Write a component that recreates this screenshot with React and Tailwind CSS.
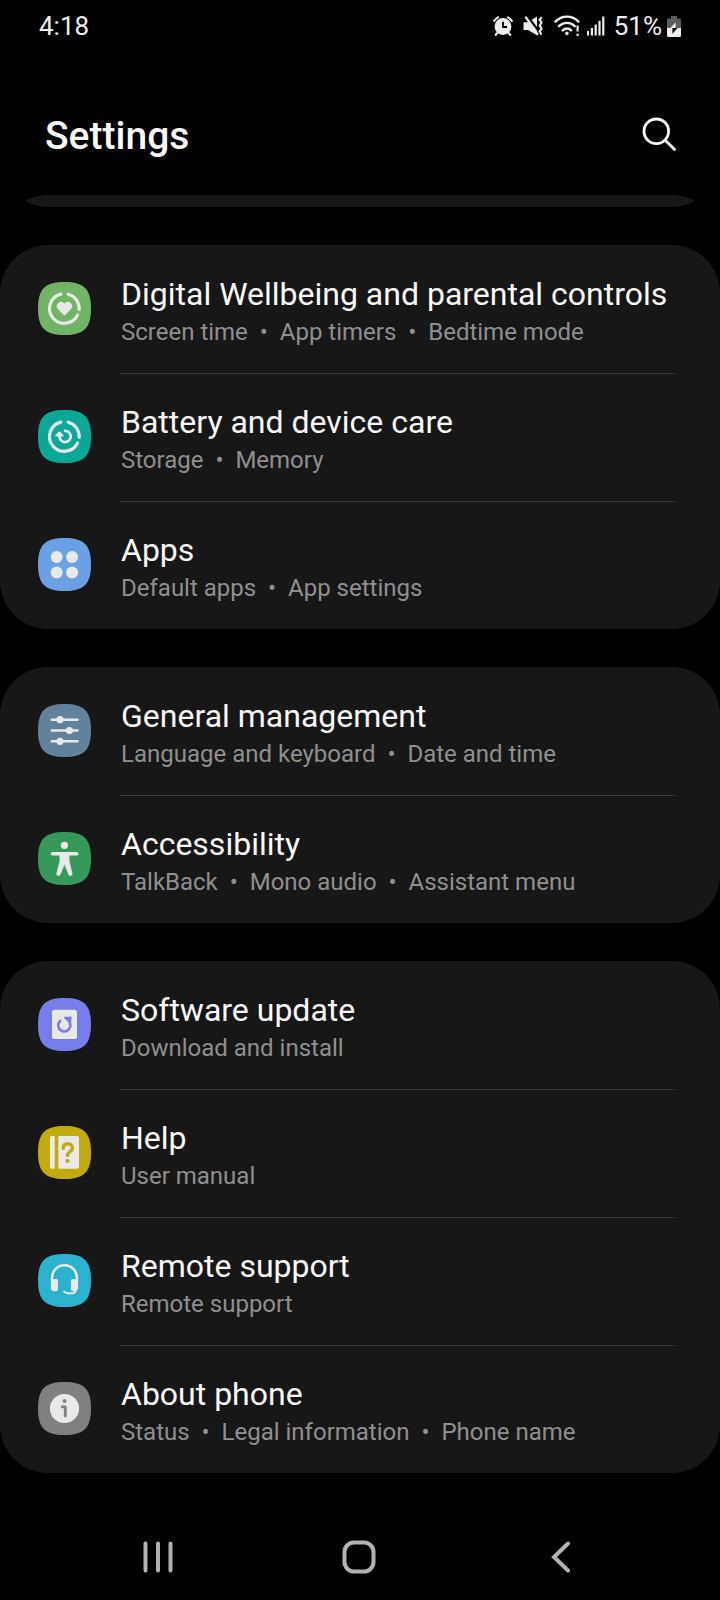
import React from "react";

const SQUIRCLE =
  "M26.5 0C46 0 53 7 53 26.5S46 53 26.5 53 0 46 0 26.5 7 0 26.5 0Z";

function Tile({ color, children }) {
  return (
    <svg viewBox="0 0 53 53" className="size-[53px] shrink-0" aria-hidden="true" fill="none" strokeLinecap="round" strokeLinejoin="round">
      <path d={SQUIRCLE} fill={color} />
      {children}
    </svg>
  );
}

const INK = "#e9e9e9";

function Ring() {
  return (
    <path
      d="M30.2 12.2A14.8 14.8 0 0 1 41.2 27.4M39.6 33A14.8 14.8 0 1 1 22.9 12.1"
      stroke={INK}
      strokeWidth="3.2"
    />
  );
}

const icons = {
  wellbeing: (
    <Tile color="#6fb564">
      <Ring />
      <path
        d="M26.4 32.8l-6-5.9a3.9 3.9 0 0 1 0-5.3 3.9 3.9 0 0 1 5.3 0l.7.7.7-.7a3.9 3.9 0 0 1 5.3 0 3.9 3.9 0 0 1 0 5.3Z"
        fill={INK}
        stroke={INK}
        strokeWidth="1.2"
      />
    </Tile>
  ),
  battery: (
    <Tile color="#0aa996">
      <Ring />
      <path d="M27 20.8A5.6 5.6 0 1 1 21.6 27.5V25" stroke={INK} strokeWidth="2.8" />
      <path d="M21.4 22.4l3.4 3.2h-6.7Z" fill={INK} stroke={INK} strokeWidth="1.8" />
    </Tile>
  ),
  apps: (
    <Tile color="#69a1e4">
      <g fill={INK}>
        <circle cx="18.7" cy="19" r="6" />
        <circle cx="34.1" cy="19" r="6" />
        <circle cx="18.7" cy="34.5" r="6" />
        <circle cx="34.1" cy="34.5" r="6" />
      </g>
    </Tile>
  ),
  general: (
    <Tile color="#61829a">
      <path d="M13.8 15.7H39.6M13.8 26.5H39.6M13.8 37.3H39.6" stroke={INK} strokeWidth="2.4" />
      <g fill={INK}>
        <circle cx="22" cy="15.7" r="3.6" />
        <circle cx="31.4" cy="26.5" r="3.6" />
        <circle cx="22" cy="37.3" r="3.6" />
      </g>
    </Tile>
  ),
  accessibility: (
    <Tile color="#37985b">
      <circle cx="26.4" cy="13.3" r="3.6" fill={INK} />
      <path d="M14.5 21.8H38.7" stroke={INK} strokeWidth="3.6" />
      <path
        d="M22 22h9v7l3 12.4c.5 2.3-2.6 3-3.3.9L26.5 31.8 22.2 42.3c-.8 2.1-3.8 1.4-3.4-.9L22 29Z"
        fill={INK}
        stroke={INK}
        strokeWidth="0.8"
      />
    </Tile>
  ),
  update: (
    <Tile color="#777de9">
      <rect x="14" y="11.8" width="25" height="29.2" rx="2.6" fill={INK} />
      <path d="M22.2 23A6 6 0 1 0 31.9 25.4" stroke="#777de9" strokeWidth="2.7" />
      <path d="M26.6 19.4L33 19.2L32.4 25.6Z" fill="#777de9" stroke="#777de9" strokeWidth="1.4" />
    </Tile>
  ),
  help: (
    <Tile color="#c1ab0f">
      <path
        d="M14 10h2.7v32.7H14a2 2 0 0 1-2-2V12a2 2 0 0 1 2-2ZM20.4 10H39a2 2 0 0 1 2 2v28.7a2 2 0 0 1-2 2H20.4Z"
        fill={INK}
      />
      <path d="M25.2 22.4c0-2.8 1.8-4.6 4.6-4.6s4.7 1.8 4.7 4.4c0 3.2-5 3.4-5 7.4" stroke="#c1ab0f" strokeWidth="3.4" />
      <circle cx="29.5" cy="35" r="2.1" fill="#c1ab0f" />
    </Tile>
  ),
  remote: (
    <Tile color="#2ab2cf">
      <path d="M14 28V23.6a12.4 12.4 0 0 1 24.9 0V28" stroke={INK} strokeWidth="2.5" />
      <path
        d="M16.5 25h1.9a1.6 1.6 0 0 1 1.6 1.6v8.6a2 2 0 0 1-2 2h-1.5a3.6 3.6 0 0 1-3.6-3.6v-5a3.6 3.6 0 0 1 3.6-3.6ZM36.4 25h-1.9a1.6 1.6 0 0 0-1.6 1.6v8.6a2 2 0 0 0 2 2h1.5a3.6 3.6 0 0 0 3.6-3.6v-5a3.6 3.6 0 0 0-3.6-3.6Z"
        fill={INK}
      />
      <path d="M38 35.8l-1.2 2.6c-.4.6-.9.8-1.6.8h-5.6c-1.6 0-2.8-.6-3.6-1.7" stroke={INK} strokeWidth="2" />
    </Tile>
  ),
  about: (
    <Tile color="#808080">
      <circle cx="26.5" cy="26.5" r="14.6" fill={INK} />
      <circle cx="26.6" cy="19" r="1.9" fill="#808080" />
      <path d="M24.3 24.9H27.3V34" stroke="#808080" strokeWidth="2.9" />
    </Tile>
  ),
};

const groups = [
  [
    { icon: "wellbeing", title: "Digital Wellbeing and parental controls", notes: ["Screen time", "App timers", "Bedtime mode"] },
    { icon: "battery", title: "Battery and device care", notes: ["Storage", "Memory"] },
    { icon: "apps", title: "Apps", notes: ["Default apps", "App settings"] },
  ],
  [
    { icon: "general", title: "General management", notes: ["Language and keyboard", "Date and time"] },
    { icon: "accessibility", title: "Accessibility", notes: ["TalkBack", "Mono audio", "Assistant menu"] },
  ],
  [
    { icon: "update", title: "Software update", notes: ["Download and install"] },
    { icon: "help", title: "Help", notes: ["User manual"] },
    { icon: "remote", title: "Remote support", notes: ["Remote support"] },
    { icon: "about", title: "About phone", notes: ["Status", "Legal information", "Phone name"] },
  ],
];

function Row({ icon, title, notes, first }) {
  return (
    <li>
      <a href="#" className="flex h-32 pl-[38px]">
        <span className="flex pt-[37px]">{icons[icon]}</span>
        <span
          className={
            "ml-[29px] mr-[45px] flex min-w-0 flex-1 flex-col border-t pt-[29px] " +
            (first ? "border-transparent" : "border-[#3a3a3a]")
          }
        >
          <span className="pl-px text-[32px] leading-[38px] whitespace-nowrap text-[#fafafa]">{title}</span>
          <span className="pl-px text-[24px] leading-[38px] whitespace-pre text-[#8f8f8f]">
            {notes.join("\u00a0 \u2022 \u00a0")}
          </span>
        </span>
      </a>
    </li>
  );
}

function StatusBar() {
  return (
    <div className="flex h-[52px] items-center justify-between px-[39px] text-[26px] leading-[30px] text-[#ededed]">
      <time>4:18</time>
      <div className="flex items-center">
        <svg viewBox="0 0 20 20" className="h-5 w-5" fill="none" aria-label="Alarm set" role="img">
          <circle cx="10" cy="10.5" r="8.4" fill="#ededed" />
          <path d="M1.2 4.8A12 12 0 0 1 5 1.4M18.8 4.8A12 12 0 0 0 15 1.4M4.6 16.6L2.8 18.8M15.4 16.6L17.2 18.8" stroke="#ededed" strokeWidth="2.2" strokeLinecap="round" />
          <path d="M10 5.8V11H14" stroke="#000" strokeWidth="1.8" />
        </svg>
        <svg viewBox="0 0 20 20" className="ml-[10px] h-5 w-5" fill="none" aria-label="Vibrate" role="img">
          <path d="M.5 6.2H5L14 .5V19.2L5 14H.5Z" fill="#ededed" />
          <path d="M5 1L16 15.4" stroke="#000" strokeWidth="2.2" />
          <path d="M3 1.4L14.2 18" stroke="#ededed" strokeWidth="2.4" strokeLinecap="round" />
          <path d="M18.6 1.2L16.6 3.8 18.6 6.6 16.6 9.6 18.6 12.6 16.6 15.6 18.6 18.6" stroke="#ededed" strokeWidth="2" />
        </svg>
        <svg viewBox="0 0 26 22" className="ml-[11px] h-[22px] w-[26px]" fill="none" aria-label="Wi-Fi" role="img">
          <path d="M1.4 6.6C8-.1 18-.1 24.4 6.6M5 11.2C9.4 6.7 16.6 6.7 20.8 11.2M8.7 15.4C11.2 12.9 14.8 12.9 17.1 15.4" stroke="#ededed" strokeWidth="2.4" strokeLinecap="round" />
          <circle cx="12.9" cy="18.4" r="1.8" fill="#ededed" />
          <path d="M23.6 10.4V16.6M23.6 18.8V21" stroke="#ededed" strokeWidth="2.2" />
        </svg>
        <svg viewBox="0 0 18 20" className="ml-[7px] h-5 w-[18px]" aria-label="Signal strength" role="img" fill="#ededed">
          <rect x="0" y="15" width="2" height="4.5" />
          <rect x="3.8" y="12" width="2.2" height="7.5" />
          <rect x="7.6" y="8.5" width="2.2" height="11" />
          <rect x="11.4" y="4.8" width="2.2" height="14.7" />
          <rect x="15.2" y="0.5" width="2.2" height="19" />
        </svg>
        <span className="ml-[9px]">51%</span>
        <svg viewBox="0 0 14 21" className="ml-[5px] h-[21px] w-[14px]" aria-label="Charging" role="img">
          <path d="M4 0h6v2.5h2.5A1.5 1.5 0 0 1 14 4v8H0V4a1.5 1.5 0 0 1 1.5-1.5H4Z" fill="#5c5c5c" />
          <path d="M0 12h14v7.5a1.5 1.5 0 0 1-1.5 1.5h-11A1.5 1.5 0 0 1 0 19.5Z" fill="#ededed" />
          <path d="M8.6 6.2V12H3.4Z" fill="#ededed" />
          <path d="M5.4 17.8V12H10.6Z" fill="#111" />
        </svg>
      </div>
    </div>
  );
}

export default function App() {
  return (
    <div className="flex min-h-screen flex-col overflow-hidden bg-black font-['Roboto',sans-serif]">
      <StatusBar />
      <header className="flex h-[143px] items-start justify-between pr-[43px] pl-[45px]">
        <h1 className="pt-[61px] text-[39px] leading-[46px] font-medium text-[#fafafa]">Settings</h1>
        <button type="button" aria-label="Search" className="mt-16 flex">
          <svg viewBox="0 0 36 36" className="size-9" fill="none" stroke="#fafafa" strokeWidth="2.8" strokeLinecap="round" aria-hidden="true">
            <circle cx="15.3" cy="15.3" r="12.3" />
            <path d="M24.2 24.2L33.6 33.6" />
          </svg>
        </button>
      </header>

      <main className="flex flex-1 flex-col gap-[38px] overflow-hidden rounded-t-[48px]">
        <div className="-mt-[84px] h-24 shrink-0 rounded-[48px] bg-[#171717]" />
        {groups.map((rows, g) => (
          <ul key={g} className="rounded-[48px] bg-[#171717]">
            {rows.map((row, i) => (
              <Row key={row.title} {...row} first={i === 0} />
            ))}
          </ul>
        ))}
      </main>

      <nav className="grid h-[86px] grid-cols-3 place-items-center pr-[59px] pl-[57px]">
        <button type="button" aria-label="Recent apps">
          <svg viewBox="0 0 34 34" className="size-[34px]" stroke="#b2b2b2" strokeWidth="4" strokeLinecap="round" fill="none">
            <path d="M4.5 3.5V30.5M17 3.5V30.5M29.5 3.5V30.5" />
          </svg>
        </button>
        <button type="button" aria-label="Home">
          <svg viewBox="0 0 34 34" className="size-[34px]" stroke="#b2b2b2" strokeWidth="4" fill="none">
            <rect x="2.5" y="2.5" width="29" height="29" rx="9.5" />
          </svg>
        </button>
        <button type="button" aria-label="Back">
          <svg viewBox="0 0 34 34" className="size-[34px]" stroke="#b2b2b2" strokeWidth="4" strokeLinecap="round" fill="none">
            <path d="M25 3.5L11 17 25 30.5" />
          </svg>
        </button>
      </nav>
    </div>
  );
}
